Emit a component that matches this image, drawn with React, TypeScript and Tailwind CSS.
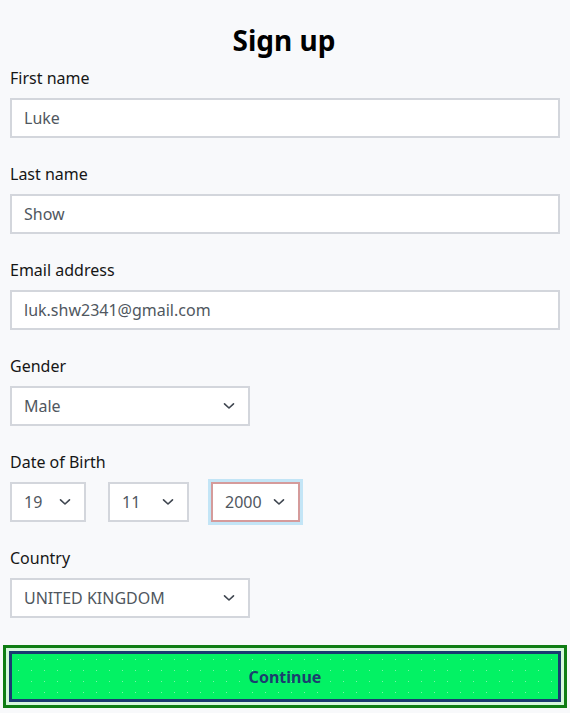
import { ReactNode } from "react"

const Chevron = () => (
    <svg width="12" height="8" viewBox="0 0 12 8" fill="none" className="shrink-0">
        <path d="M1.5 1.8 L6 6 L10.5 1.8" stroke="#3f4650" strokeWidth="1.6" strokeLinecap="round" strokeLinejoin="round" />
    </svg>
)

const Field = ({ label, children }: { label: string, children: ReactNode }) => (
    <div className="flex flex-col gap-2 mb-6">
        <label className="text-[16px] leading-6 text-[#161616]">{label}</label>
        {children}
    </div>
)

const TextBox = ({ value }: { value: string }) => (
    <div className="h-10 w-full border-2 border-[#d3d6dc] bg-white pl-3 flex items-center text-[16px] text-[#505760]">
        {value}
    </div>
)

const SelectBox = ({ value, className }: { value: string, className: string }) => (
    <div className={"h-10 border-2 border-[#d3d6dc] bg-white pl-3 pr-[13px] flex items-center justify-between text-[16px] text-[#505760] " + className}>
        <span>{value}</span>
        <Chevron />
    </div>
)

export default function App() {
    return (
        <div className="min-h-[713px] bg-[#f8f9fb] font-['Noto_Sans','Open_Sans',sans-serif]">
            <div className="px-[10px] pt-[22px] pb-[3px]">
                <h1 className="text-[28px] leading-9 font-bold text-black text-center mb-[8px] -ml-[2px]">Sign up</h1>
                <Field label="First name"><TextBox value="Luke" /></Field>
                <Field label="Last name"><TextBox value="Show" /></Field>
                <Field label="Email address"><TextBox value="luk.shw2341@gmail.com" /></Field>
                <Field label="Gender"><SelectBox value="Male" className="w-[240px]" /></Field>
                <Field label="Date of Birth">
                    <div className="flex items-center gap-[22px]">
                        <SelectBox value="19" className="w-[76px]" />
                        <SelectBox value="11" className="w-[81px]" />
                        <div className="p-[3px] bg-[#c3e5f6] -m-[3px]">
                            <SelectBox value="2000" className="w-[89px] !border-[#d59b9b]" />
                        </div>
                    </div>
                </Field>
                <Field label="Country"><SelectBox value="UNITED KINGDOM" className="w-[240px]" /></Field>
            </div>
            <div className="mx-[3px] border-[3px] border-[#0f7d14] p-[3px] bg-[#d6f7dc]">
                <button className="w-full h-[51px] border-[3px] border-[#1a3b70] bg-[#03f264] bg-[radial-gradient(circle,#7af5a8_0.6px,transparent_1px)] bg-[length:13px_11px] text-[16px] font-bold text-[#1b3f6e]">
                    Continue
                </button>
            </div>
        </div>
    )
}
